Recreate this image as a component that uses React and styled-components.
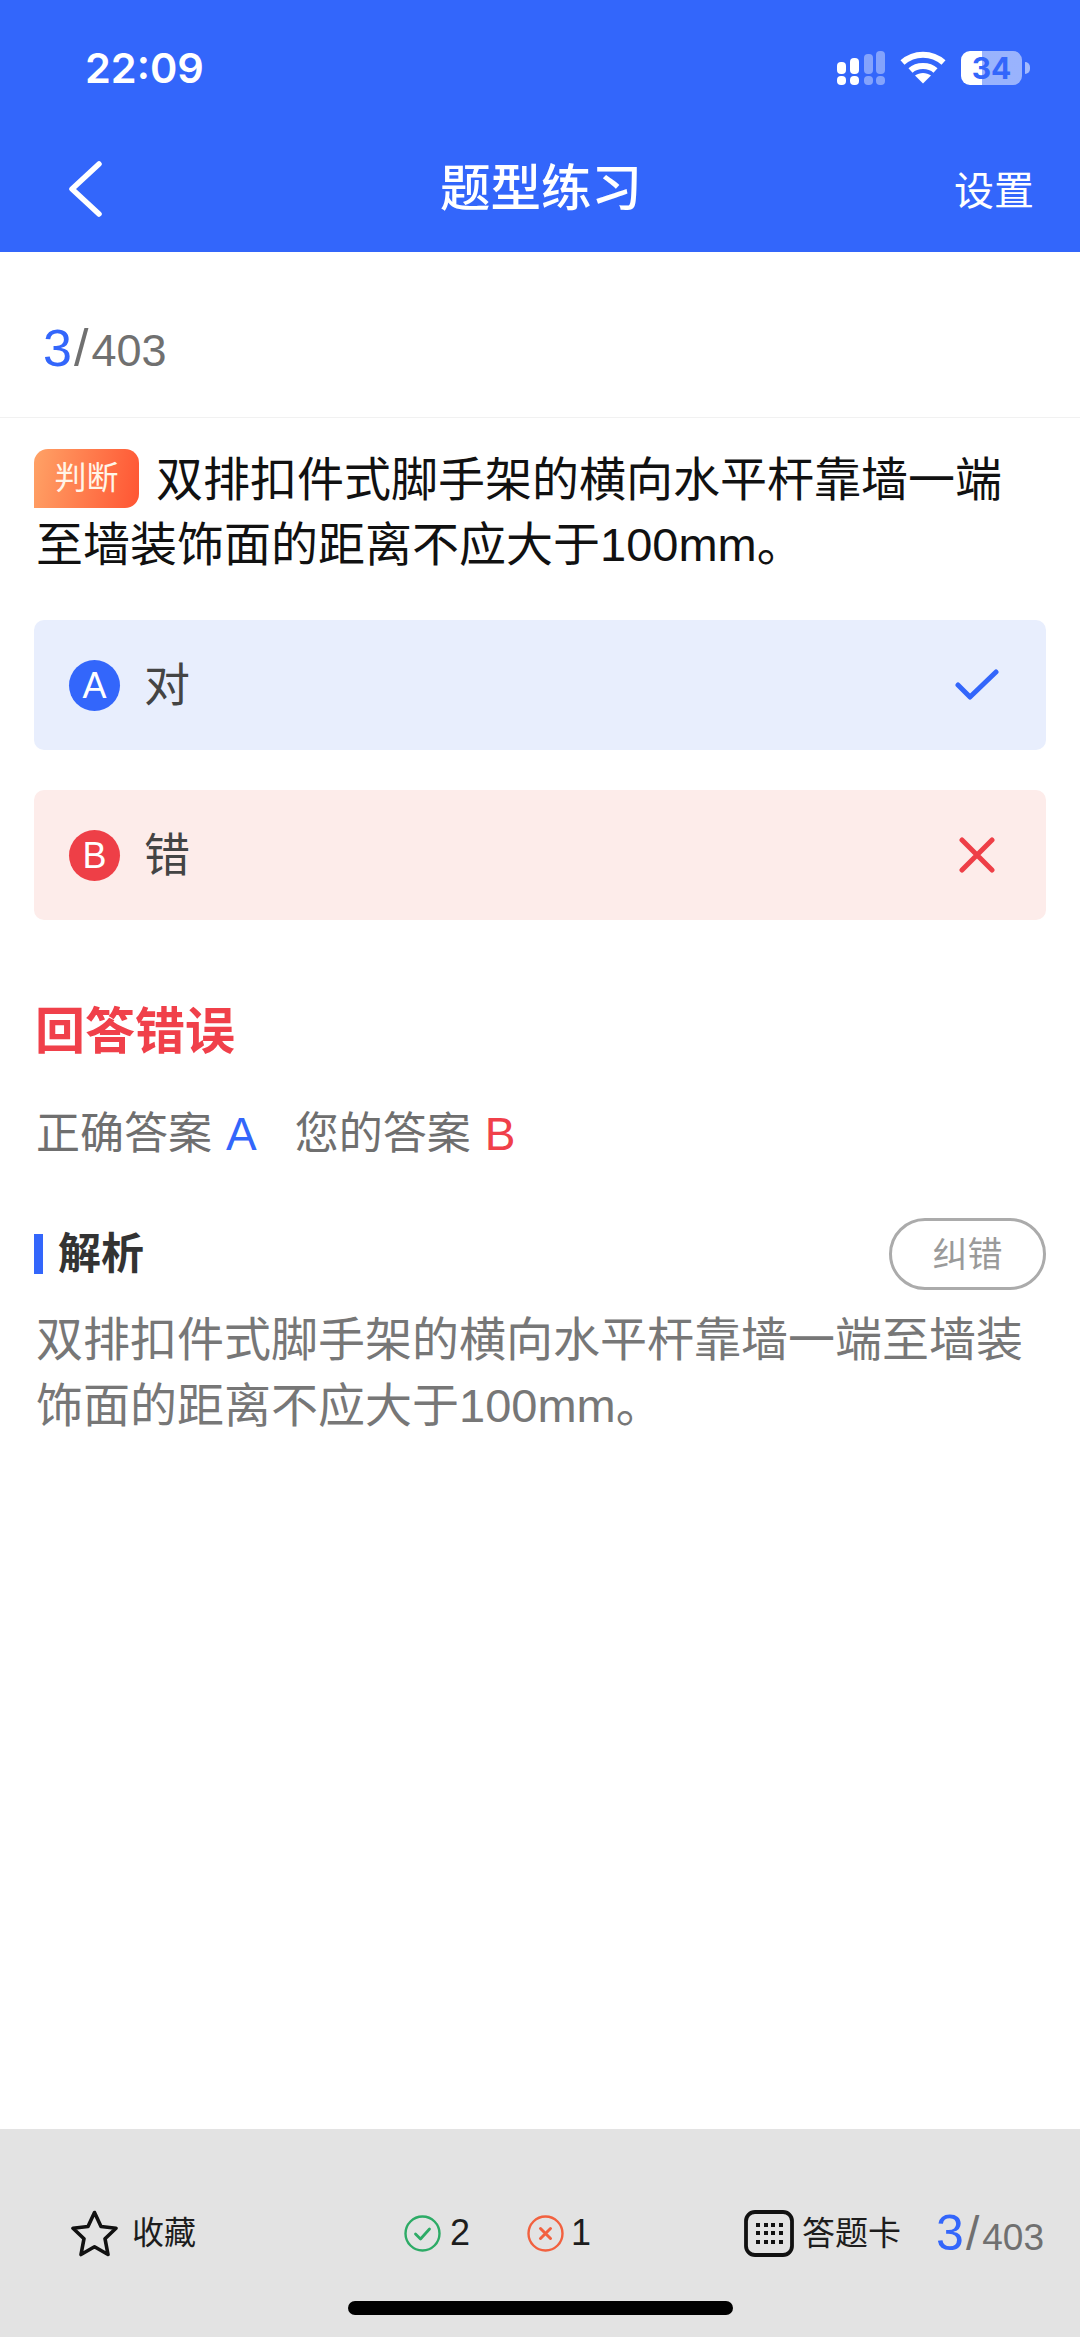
import React from 'react';
import styled, { createGlobalStyle } from 'styled-components';

const BLUE = '#3366fb';
const RED = '#f0404a';
const SANS = '"Liberation Sans", "Noto Sans CJK SC", sans-serif';

const Global = createGlobalStyle`
  html, body { margin: 0; padding: 0; background: #fff; }
  body { font-family: ${SANS}; }
  * { box-sizing: border-box; }
`;

const Page = styled.div`
  width: 1080px;
  height: 2337px;
  display: flex;
  flex-direction: column;
  overflow: hidden;
  background: #fff;
`;

const Header = styled.header`
  height: 252px;
  flex: none;
  background: ${BLUE};
  color: #fff;
  display: flex;
  flex-direction: column;
`;

const StatusBar = styled.div`
  height: 126px;
  padding: 12px 50px 0 85px;
  display: flex;
  align-items: center;
  justify-content: space-between;
`;

const Clock = styled.span`
  font: 600 41.5px/1 Inter, sans-serif;
`;

const StatusIcons = styled.div`
  display: flex;
  align-items: center;
  gap: 15px;
  margin-bottom: 3px;
`;

const Battery = styled.div`
  width: 61px;
  height: 34px;
  border-radius: 9px;
  overflow: hidden;
  background: linear-gradient(90deg, #fff 0 34%, rgba(255, 255, 255, 0.5) 34% 100%);
  color: ${BLUE};
  font: 700 30px/34px Inter, sans-serif;
  text-align: center;
`;

const BatteryWrap = styled.div`
  display: flex;
  align-items: center;
  gap: 3px;
`;

const BatteryNub = styled.span`
  width: 5px;
  height: 12px;
  border-radius: 0 6px 6px 0;
  background: rgba(255, 255, 255, 0.55);
`;

const NavBar = styled.div`
  height: 126px;
  padding: 0 46px;
  display: grid;
  grid-template-columns: 1fr 200px 1fr;
  align-items: center;
`;

const BackSlot = styled.span`
  display: flex;
  margin-left: 20px;
`;

const NavTitle = styled.h1`
  margin: 0;
  text-align: center;
  white-space: nowrap;
  font: 500 50.5px/1 ${SANS};
`;

const NavAction = styled.span`
  justify-self: end;
  font: 400 40px/1 ${SANS};
  padding-top: 4px;
`;

const Main = styled.main`
  flex: 1;
  display: flex;
  flex-direction: column;
`;

const Progress = styled.div`
  height: 166px;
  padding: 26px 0 0 43px;
  border-bottom: 1px solid #f1f1f1;
  display: flex;
  align-items: center;
`;

const Fraction = styled.div`
  display: flex;
  align-items: baseline;
`;

const Count = styled.span`
  color: ${BLUE};
  font-size: ${(p) => p.$size}px;
  line-height: 1;
`;

const Slash = styled.span`
  color: #707070;
  font-size: ${(p) => p.$size}px;
  line-height: 1;
  margin: 0 3px 0 2px;
`;

const Total = styled.span`
  color: #707070;
  font-size: ${(p) => p.$size}px;
  line-height: 1;
`;

const Body = styled.div`
  padding: 29px 34px 0;
  display: flex;
  flex-direction: column;
`;

const Question = styled.p`
  margin: 0 30px 0 2px;
  font-size: 47px;
  line-height: 65px;
  color: #111;
`;

const Tag = styled.span`
  display: inline-flex;
  align-items: center;
  justify-content: center;
  width: 105px;
  height: 59px;
  margin: -20px 17px -20px -2px;
  vertical-align: 7px;
  border-radius: 14px 14px 14px 0;
  background: linear-gradient(100deg, #ffa266 0%, #ff5533 100%);
  color: #fff5e8;
  font-size: 32px;
  line-height: 1;
`;

const Option = styled.div`
  height: 130px;
  margin-top: ${(p) => p.$top}px;
  padding: 0 47px 0 35px;
  border-radius: 10px;
  background: ${(p) => (p.$wrong ? '#fdecea' : '#e8eefd')};
  display: flex;
  align-items: center;
`;

const OptionKey = styled.span`
  width: 51px;
  height: 51px;
  flex: none;
  border-radius: 50%;
  background: ${(p) => (p.$wrong ? '#ee3f47' : BLUE)};
  color: #fff;
  font: 400 36px/51px ${SANS};
  text-align: center;
`;

const OptionText = styled.span`
  flex: 1;
  margin-left: 24px;
  color: #444;
  font-size: 46px;
  line-height: 1;
`;

const OptionMark = styled.span`
  width: 44px;
  display: flex;
  justify-content: center;
`;

const Verdict = styled.h2`
  margin: 79px 0 0 1px;
  color: ${RED};
  font: 700 50px/66px ${SANS};
`;

const AnswerLine = styled.div`
  margin: 39px 0 0 2px;
  display: flex;
  align-items: center;
  color: #6f6f6f;
  font-size: 44px;
  line-height: 60px;
`;

const AnswerPair = styled.span`
  display: inline-flex;
  align-items: center;
  gap: 14px;
  margin-right: 38px;
`;

const AnswerLetter = styled.span`
  color: ${(p) => p.$color};
  font-size: 46px;
`;

const AnalysisHead = styled.div`
  margin-top: 54px;
  height: 72px;
  display: flex;
  align-items: center;
  justify-content: space-between;
`;

const AnalysisTitle = styled.div`
  display: flex;
  align-items: center;
  gap: 15px;
  color: #333;
  font: 700 43px/1 ${SANS};
  &::before {
    content: '';
    width: 9px;
    height: 40px;
    background: ${BLUE};
  }
`;

const ReportButton = styled.button`
  width: 157px;
  height: 72px;
  padding: 0;
  border: 3px solid #ababab;
  border-radius: 36px;
  background: #fff;
  color: #9a9a9a;
  font: 400 35px/1 ${SANS};
`;

const Analysis = styled.p`
  margin: 17px 0 0 2px;
  color: #777;
  font-size: 47px;
  line-height: 66px;
`;

const Footer = styled.footer`
  height: 208px;
  flex: none;
  background: #e3e3e3;
  display: flex;
  flex-direction: column;
  align-items: center;
`;

const Toolbar = styled.div`
  width: 100%;
  height: 172px;
  flex: none;
  padding: 36px 40px 0 71px;
  display: flex;
  align-items: center;
  color: #1d1d1d;
`;

const ToolItem = styled.div`
  flex: none;
  display: flex;
  align-items: center;
  white-space: nowrap;
  gap: ${(p) => p.$gap}px;
  margin-left: ${(p) => p.$left || 0}px;
  font-size: ${(p) => p.$size}px;
  line-height: 1;
`;

const HomeBar = styled.div`
  width: 385px;
  height: 14px;
  border-radius: 7px;
  background: #000;
`;

const Signal = () => (
  <svg width="48" height="34" viewBox="0 0 48 34" fill="#fff">
    <rect x="0" y="11" width="9" height="12" rx="4" />
    <rect x="13" y="7" width="9" height="16" rx="4" />
    <rect x="27" y="3" width="9" height="20" rx="4" opacity=".4" />
    <rect x="39" y="0" width="9" height="23" rx="4" opacity=".4" />
    <rect x="0" y="25" width="9" height="9" rx="4" />
    <rect x="13" y="25" width="9" height="9" rx="4" />
    <rect x="27" y="25" width="9" height="9" rx="4" opacity=".4" />
    <rect x="39" y="25" width="9" height="9" rx="4" opacity=".4" />
  </svg>
);

const Wifi = () => (
  <svg width="46" height="33" viewBox="0 0 46 33" fill="none" stroke="#fff" strokeWidth="6">
    <path d="M2.5 11.5C14 1 32 1 43.5 11.5" />
    <path d="M10.5 19.5C17 13.5 29 13.5 35.5 19.5" />
    <path d="M23 32.5L15 24.5C19.5 21 26.5 21 31 24.5Z" fill="#fff" stroke="none" />
  </svg>
);

const BackArrow = () => (
  <svg width="38" height="56" viewBox="0 0 38 56" fill="none" stroke="#fff" strokeWidth="5.5" strokeLinecap="round" strokeLinejoin="round">
    <path d="M33 3L6 28L33 53" />
  </svg>
);

const Check = () => (
  <svg width="44" height="32" viewBox="0 0 44 32" fill="none" stroke={BLUE} strokeWidth="5" strokeLinecap="round" strokeLinejoin="round">
    <path d="M3 16L15 28L41 3" />
  </svg>
);

const Cross = () => (
  <svg width="36" height="36" viewBox="0 0 36 36" fill="none" stroke="#ee3f47" strokeWidth="5" strokeLinecap="round">
    <path d="M3 3L33 33M33 3L3 33" />
  </svg>
);

const Star = () => (
  <svg width="47" height="47" viewBox="0 0 47 47" fill="none" stroke="#111" strokeWidth="3.6" strokeLinejoin="round">
    <path d="M23.5 2.5L30 16.5L45 18.2L34 28.7L37 44.5L23.5 36.8L10 44.5L13 28.7L2 18.2L17 16.5Z" />
  </svg>
);

const CheckCircle = () => (
  <svg width="37" height="37" viewBox="0 0 37 37" fill="none" stroke="#2dab66" strokeWidth="2.4" strokeLinecap="round" strokeLinejoin="round">
    <circle cx="18.5" cy="18.5" r="17" />
    <path d="M11.5 19L16.5 24L25.5 14" strokeWidth="2.8" />
  </svg>
);

const CrossCircle = () => (
  <svg width="37" height="37" viewBox="0 0 37 37" fill="none" stroke="#f2613f" strokeWidth="2.4" strokeLinecap="round">
    <circle cx="18.5" cy="18.5" r="17" />
    <path d="M13.5 13.5L23.5 23.5M23.5 13.5L13.5 23.5" strokeWidth="3" />
  </svg>
);

const CardGrid = () => (
  <svg width="50" height="47" viewBox="0 0 50 47" fill="none">
    <rect x="2" y="2" width="46" height="43" rx="9" stroke="#111" strokeWidth="3.8" />
    {[15, 23, 32].map((y) =>
      [14, 22, 29, 37].map((x) => <rect key={`${x}-${y}`} x={x - 2} y={y - 2} width="4" height="4" fill="#111" />)
    )}
  </svg>
);

export default function App() {
  return (
    <Page>
      <Global />
      <Header>
        <StatusBar>
          <Clock>22:09</Clock>
          <StatusIcons>
            <Signal />
            <Wifi />
            <BatteryWrap>
              <Battery>34</Battery>
              <BatteryNub />
            </BatteryWrap>
          </StatusIcons>
        </StatusBar>
        <NavBar>
          <BackSlot><BackArrow /></BackSlot>
          <NavTitle>题型练习</NavTitle>
          <NavAction>设置</NavAction>
        </NavBar>
      </Header>
      <Main>
        <Progress>
          <Fraction>
            <Count $size={52}>3</Count>
            <Slash $size={52}>/</Slash>
            <Total $size={45}>403</Total>
          </Fraction>
        </Progress>
        <Body>
          <Question>
            <Tag>判断</Tag>
            双排扣件式脚手架的横向水平杆靠墙一端至墙装饰面的距离不应大于100mm。
          </Question>
          <Option $top={43}>
            <OptionKey>A</OptionKey>
            <OptionText>对</OptionText>
            <OptionMark><Check /></OptionMark>
          </Option>
          <Option $top={40} $wrong>
            <OptionKey $wrong>B</OptionKey>
            <OptionText>错</OptionText>
            <OptionMark><Cross /></OptionMark>
          </Option>
          <Verdict>回答错误</Verdict>
          <AnswerLine>
            <AnswerPair>
              正确答案<AnswerLetter $color={BLUE}>A</AnswerLetter>
            </AnswerPair>
            <AnswerPair>
              您的答案<AnswerLetter $color={RED}>B</AnswerLetter>
            </AnswerPair>
          </AnswerLine>
          <AnalysisHead>
            <AnalysisTitle>解析</AnalysisTitle>
            <ReportButton>纠错</ReportButton>
          </AnalysisHead>
          <Analysis>双排扣件式脚手架的横向水平杆靠墙一端至墙装饰面的距离不应大于100mm。</Analysis>
        </Body>
      </Main>
      <Footer>
        <Toolbar>
          <ToolItem $gap={14} $size={32}>
            <Star />
            收藏
          </ToolItem>
          <ToolItem $gap={9} $size={36} $left={208}>
            <CheckCircle />2
          </ToolItem>
          <ToolItem $gap={7} $size={36} $left={57}>
            <CrossCircle />1
          </ToolItem>
          <ToolItem $gap={8} $size={33} $left={153}>
            <CardGrid />
            答题卡
          </ToolItem>
          <ToolItem $gap={0} $size={36} $left={35}>
            <Fraction>
              <Count $size={50}>3</Count>
              <Slash $size={48}>/</Slash>
              <Total $size={37}>403</Total>
            </Fraction>
          </ToolItem>
        </Toolbar>
        <HomeBar />
      </Footer>
    </Page>
  );
}
